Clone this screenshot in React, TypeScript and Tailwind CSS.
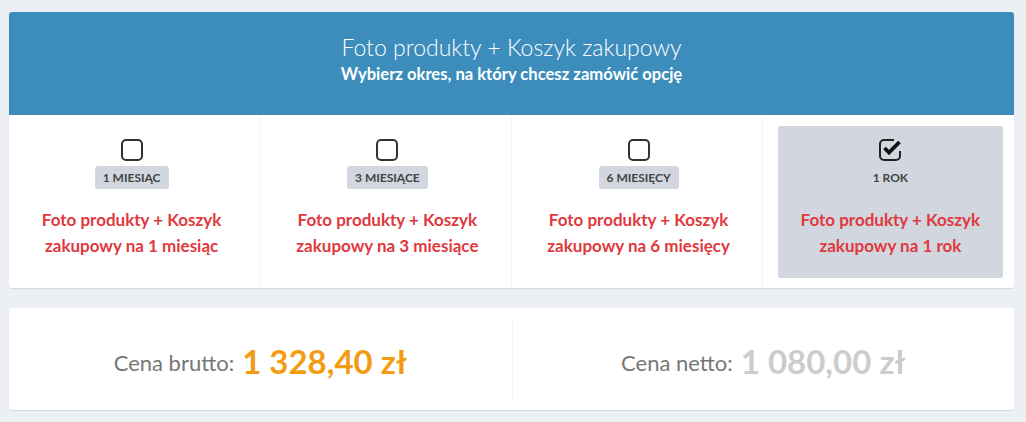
const periods = [
  { label: '1 miesiąc', text: 'Foto produkty + Koszyk zakupowy na 1 miesiąc', checked: false },
  { label: '3 miesiące', text: 'Foto produkty + Koszyk zakupowy na 3 miesiące', checked: false },
  { label: '6 miesięcy', text: 'Foto produkty + Koszyk zakupowy na 6 miesięcy', checked: false },
  { label: '1 rok', text: 'Foto produkty + Koszyk zakupowy na 1 rok', checked: true },
];

const EmptyBox = () => (
  <svg width="22" height="22" viewBox="0 0 22 22" fill="none">
    <rect x="1" y="1" width="20" height="20" rx="4" stroke="#333" strokeWidth="2" />
  </svg>
);

const CheckedBox = () => (
  <svg width="22" height="22" viewBox="0 0 22 22" fill="none">
    <path
      d="M15 1H5a4 4 0 0 0-4 4v12a4 4 0 0 0 4 4h12a4 4 0 0 0 4-4v-5"
      stroke="#222"
      strokeWidth="2"
    />
    <path d="M5.5 9L10 13.5L20.5 3" stroke="#111" strokeWidth="3.8" />
  </svg>
);

export default function App() {
  return (
    <div
      className="min-h-[422px] bg-[#ecf0f5] pt-3 pl-[9px] pr-3 pb-3"
      style={{ fontFamily: 'Lato, "Open Sans", sans-serif' }}
    >
      <div className="bg-white rounded-[3px] shadow-[0_1px_1px_rgba(0,0,0,0.1)] overflow-hidden">
        <div className="bg-[#3c8dbc] h-[103px] flex flex-col items-center pt-[20px] text-white">
          <h3 className="text-[23px] font-light leading-[30px]">Foto produkty + Koszyk zakupowy</h3>
          <p className="mt-[1px] text-[16.6px] font-bold leading-[22px]">
            Wybierz okres, na który chcesz zamówić opcję
          </p>
        </div>
        <div className="grid grid-cols-4 h-[173px]">
          {periods.map((p, i) => (
            <div
              key={p.label}
              className={`pt-[11px] pb-[10px] pr-[11px] ${i === 0 ? 'pl-[6px]' : 'pl-[15px]'} ${i < 3 ? 'border-r border-[#f4f4f4]' : ''}`}
            >
              <div
                className={`h-full flex flex-col items-center pt-[13px] rounded-[2px] ${p.checked ? 'bg-[#d2d6de]' : ''}`}
              >
                {p.checked ? <CheckedBox /> : <EmptyBox />}
                <span className="mt-[5px] h-[23px] px-[8px] flex items-center rounded-[3px] bg-[#d2d6de] text-[12px] font-bold text-[#444] uppercase">
                  {p.label}
                </span>
                <p className="mt-[18px] px-3 text-center text-[17px] leading-[26px] font-bold text-[#e0393e]">
                  {p.text}
                </p>
              </div>
            </div>
          ))}
        </div>
      </div>

      <div className="mt-5 bg-white rounded-[3px] shadow-[0_1px_1px_rgba(0,0,0,0.1)] h-[102px] py-[10px] grid grid-cols-2">
        <div className="flex items-center justify-center gap-[8px] pt-[6px]">
          <span className="text-[22px] text-[#777]">Cena brutto:</span>
          <span className="text-[33px] font-bold text-[#f39c12]">1 328,40 zł</span>
        </div>
        <div className="flex items-center justify-center gap-[8px] pt-[6px] border-l border-[#f4f4f4]">
          <span className="text-[22px] text-[#777]">Cena netto:</span>
          <span className="text-[33px] font-bold text-[#cccccc]">1 080,00 zł</span>
        </div>
      </div>
    </div>
  );
}
